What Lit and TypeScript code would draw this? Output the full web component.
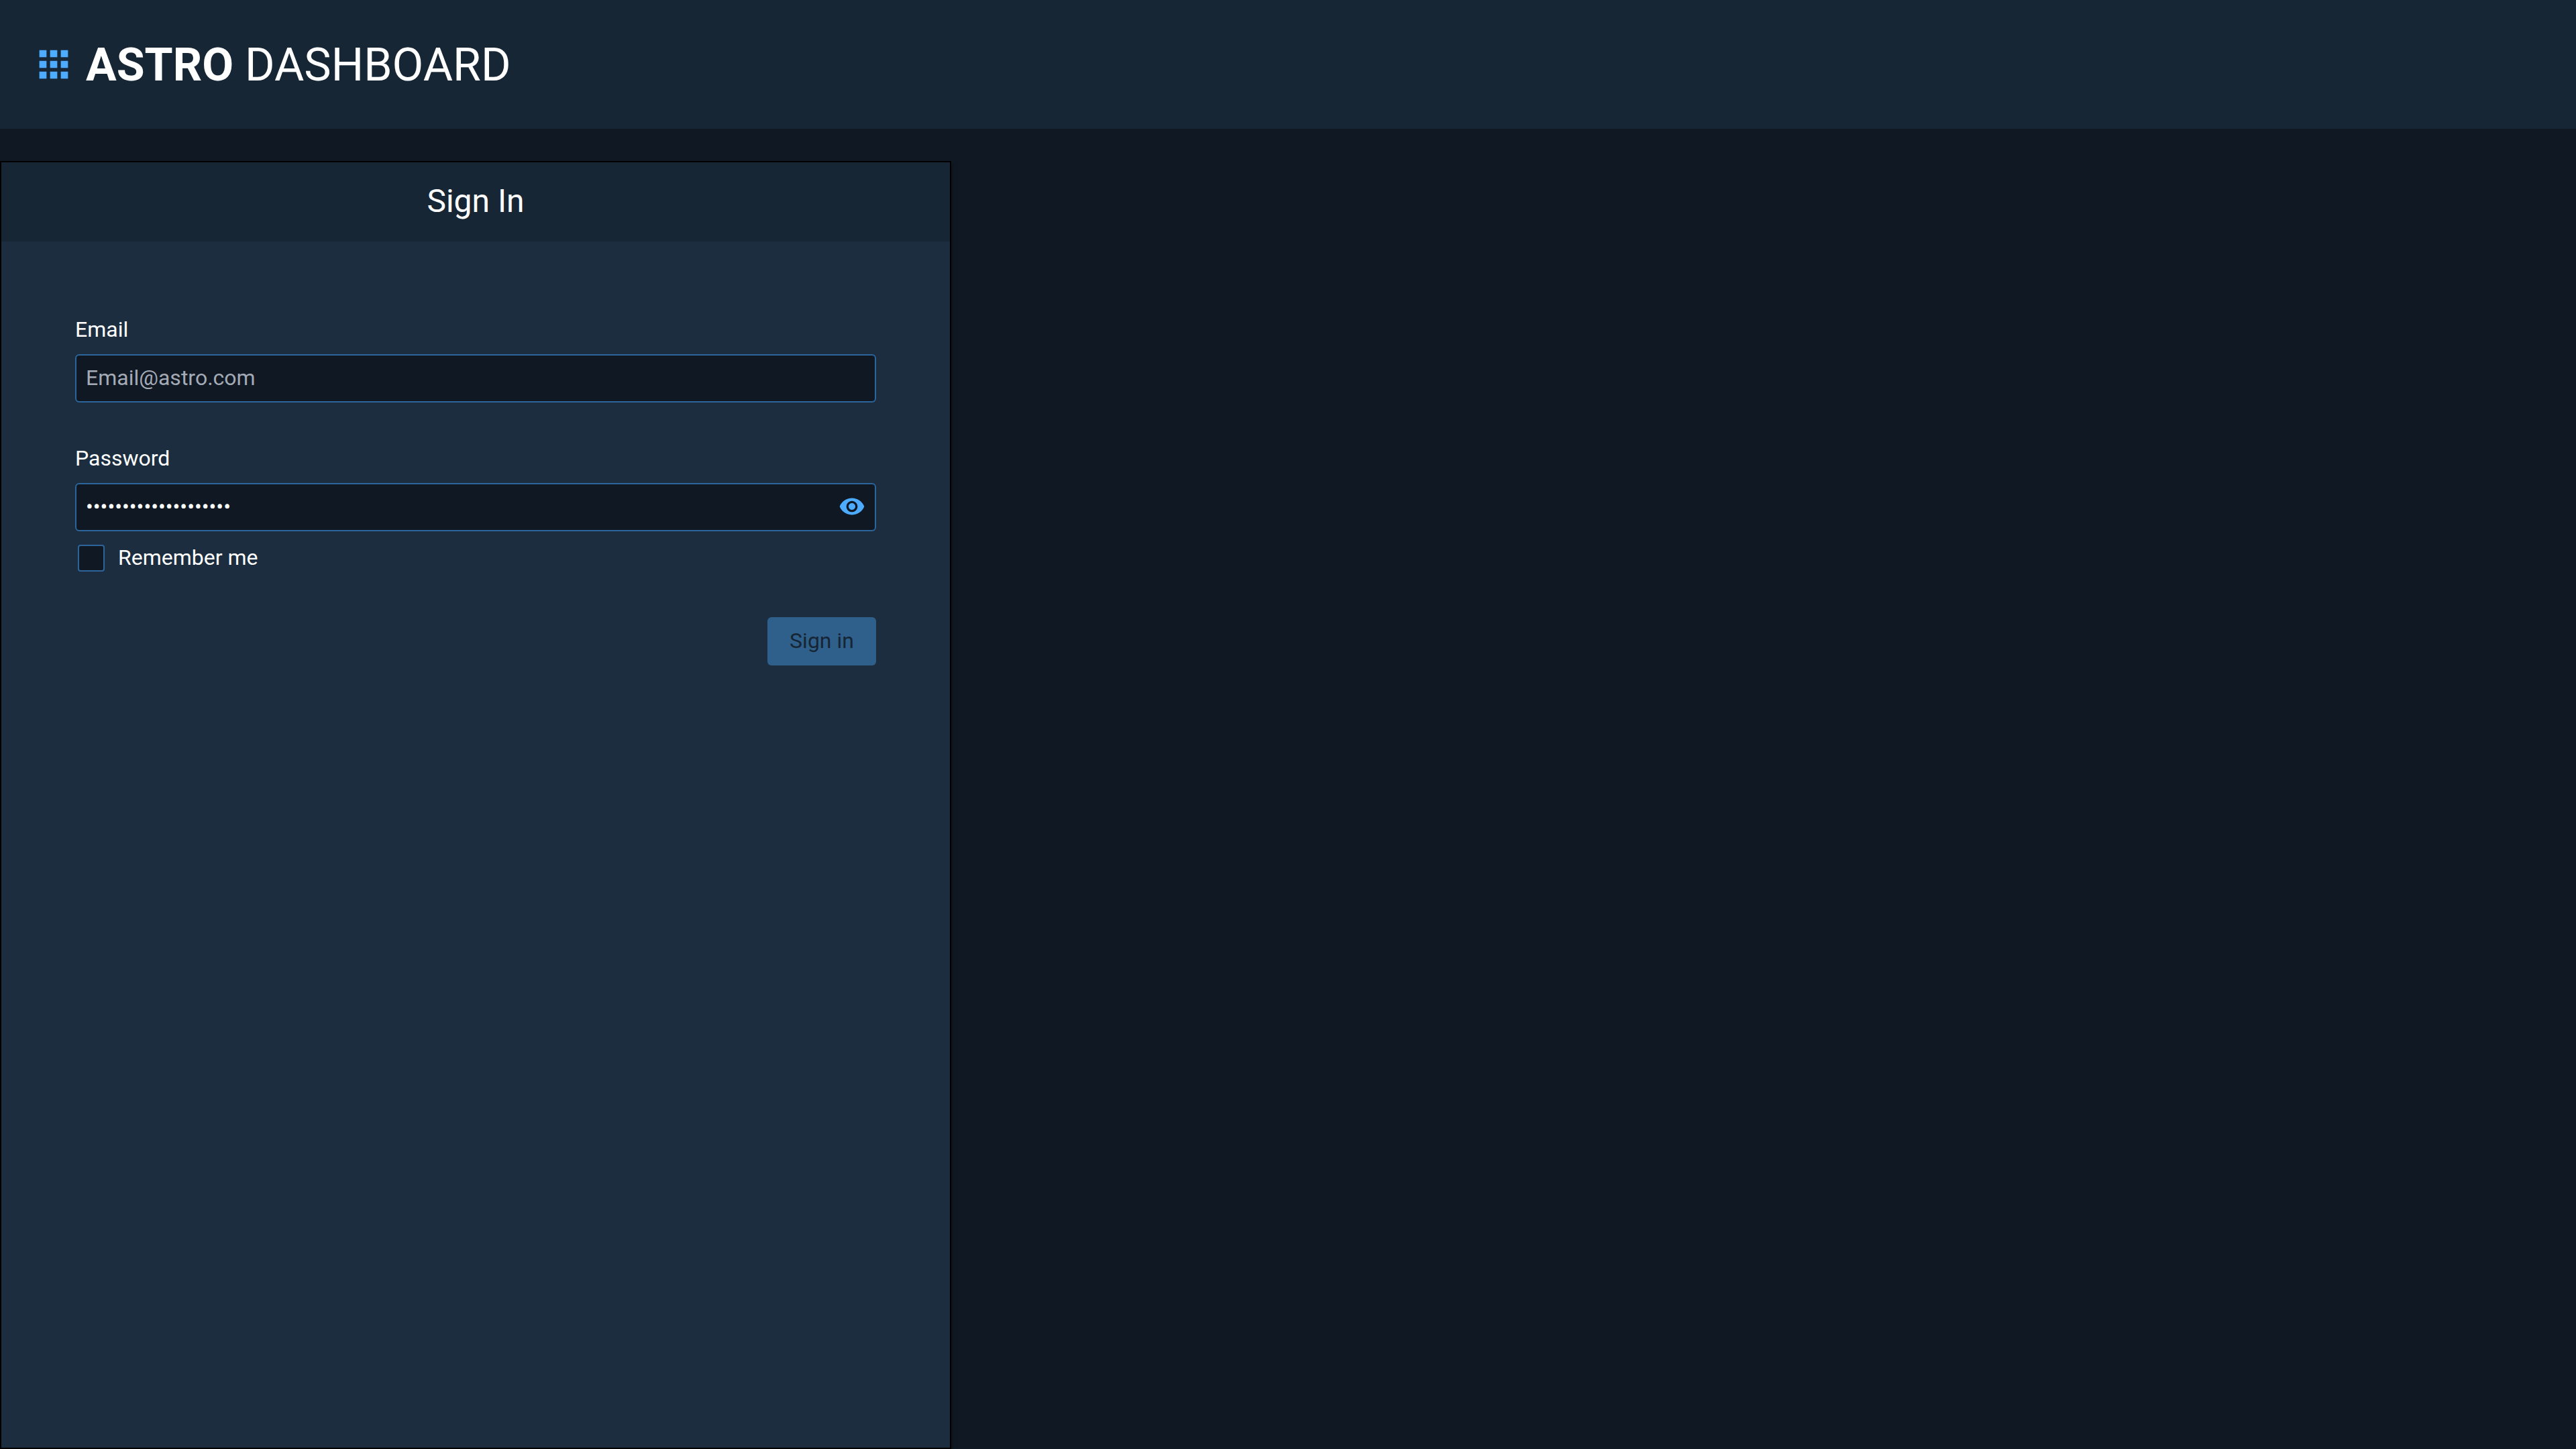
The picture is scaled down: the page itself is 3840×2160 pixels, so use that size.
import { LitElement, html, css } from "lit";
import { customElement, state } from "lit/decorators.js";

@customElement("app-header")
export class AppHeader extends LitElement {
  static styles = css`
    :host {
      display: block;
    }
    .bar {
      display: flex;
      align-items: center;
      gap: 16px;
      box-sizing: border-box;
      min-height: 192px;
      padding: 0 48px;
      background: #172635;
    }
    .menu {
      display: flex;
      padding: 0;
      border: 0;
      background: none;
      color: #4dacff;
      cursor: pointer;
    }
    .icon {
      width: 64px;
      height: 64px;
      fill: currentColor;
    }
    .title {
      margin: 0;
      padding-top: 2px;
      font-size: 68px;
      line-height: 80px;
      font-weight: 400;
    }
    .brand {
      font-weight: 700;
    }
  `;

  render() {
    return html`
      <header class="bar">
        <button class="menu" type="button" aria-label="Apps">
          <svg class="icon" viewBox="0 0 24 24" aria-hidden="true">
            <path
              d="M4 8h4V4H4v4zm6 12h4v-4h-4v4zm-6 0h4v-4H4v4zm0-6h4v-4H4v4zm6 0h4v-4h-4v4zm6-10v4h4V4h-4zm-6 4h4V4h-4v4zm6 6h4v-4h-4v4zm0 6h4v-4h-4v4z"
            />
          </svg>
        </button>
        <h1 class="title"><span class="brand">ASTRO</span> DASHBOARD</h1>
      </header>
    `;
  }
}

@customElement("sign-in-form")
export class SignInForm extends LitElement {
  @state() private revealed = false;

  static styles = css`
    :host {
      display: block;
    }
    .form {
      display: flex;
      flex-direction: column;
      padding: 112px 110px;
      font-size: 32px;
      line-height: 38px;
    }
    .field {
      display: flex;
      flex-direction: column;
      gap: 18px;
    }
    .field + .field {
      margin-top: 64px;
    }
    .box {
      display: flex;
      align-items: center;
      box-sizing: border-box;
      height: 72px;
      padding: 0 14px 2px;
      border: 2px solid #2b659b;
      border-radius: 6px;
      background: #101923;
    }
    .input {
      flex: 1;
      min-width: 0;
      padding: 0;
      border: 0;
      outline: 0;
      background: none;
      color: #fff;
      font: inherit;
    }
    .input::placeholder {
      color: #a4abb6;
      opacity: 1;
    }
    .toggle {
      display: flex;
      padding: 0;
      border: 0;
      background: none;
      color: #4dacff;
      cursor: pointer;
    }
    .icon {
      width: 40px;
      height: 40px;
      fill: currentColor;
    }
    .remember {
      display: flex;
      align-items: flex-start;
      gap: 20px;
      margin-top: 20px;
      padding-left: 4px;
    }
    .check {
      appearance: none;
      box-sizing: border-box;
      width: 40px;
      height: 40px;
      margin: 0;
      border: 2px solid #2b659b;
      border-radius: 4px;
      background: #101923;
    }
    .check:checked {
      background: #4dacff;
    }
    .submit {
      align-self: flex-end;
      min-width: 162px;
      height: 72px;
      margin-top: 68px;
      padding: 0 32px 2px;
      border: 0;
      border-radius: 6px;
      background: #4dacff;
      color: #101923;
      font: inherit;
    }
    .submit:disabled {
      opacity: 0.4;
    }
  `;

  private toggle() {
    this.revealed = !this.revealed;
  }

  render() {
    return html`
      <form class="form">
        <div class="field">
          <label for="email">Email</label>
          <div class="box">
            <input class="input" id="email" type="email" placeholder="Email@astro.com" />
          </div>
        </div>
        <div class="field">
          <label for="password">Password</label>
          <div class="box">
            <input
              class="input"
              id="password"
              type=${this.revealed ? "text" : "password"}
              value="12345678901234567890"
            />
            <button class="toggle" type="button" aria-label="Show password" @click=${this.toggle}>
              <svg class="icon" viewBox="0 0 24 24" aria-hidden="true">
                <path
                  d="M12 4.5C7 4.5 2.73 7.61 1 12c1.73 4.39 6 7.5 11 7.5s9.27-3.11 11-7.5c-1.73-4.39-6-7.5-11-7.5zM12 17c-2.76 0-5-2.24-5-5s2.24-5 5-5 5 2.24 5 5-2.24 5-5 5zm0-8c-1.66 0-3 1.34-3 3s1.34 3 3 3 3-1.34 3-3-1.34-3-3-3z"
                />
              </svg>
            </button>
          </div>
        </div>
        <div class="remember">
          <input class="check" id="remember" type="checkbox" />
          <label for="remember">Remember me</label>
        </div>
        <button class="submit" type="submit" disabled>Sign in</button>
      </form>
    `;
  }
}

@customElement("app-root")
export class AppRoot extends LitElement {
  static styles = css`
    :host {
      display: flex;
      flex-direction: column;
      min-height: 100vh;
      background: #101923;
      color: #fff;
      font-family: Roboto, "Liberation Sans", sans-serif;
    }
    .main {
      flex: 1;
      display: grid;
      grid-template-columns: 709fr 1211fr;
      padding-top: 48px;
    }
    .panel {
      border: 2px solid #000;
      background: #1b2d3e;
      box-shadow: 0 4px 8px rgba(0, 0, 0, 0.45);
      clip-path: inset(0 -32px 0 0);
    }
    .heading {
      margin: 0;
      padding: 29px 0 32px;
      background: #172635;
      font-size: 48px;
      line-height: 57px;
      font-weight: 400;
      text-align: center;
    }
  `;

  render() {
    return html`
      <app-header></app-header>
      <main class="main">
        <section class="panel">
          <h2 class="heading">Sign In</h2>
          <sign-in-form></sign-in-form>
        </section>
      </main>
    `;
  }
}
